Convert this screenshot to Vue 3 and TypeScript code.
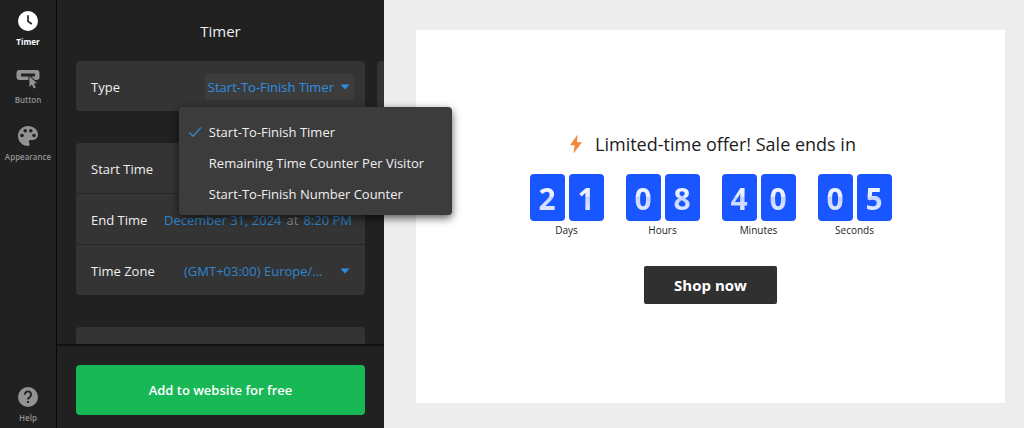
<script setup lang="ts">
import { ref } from 'vue'

const types: string[] = [
  'Start-To-Finish Timer',
  'Remaining Time Counter Per Visitor',
  'Start-To-Finish Number Counter',
]
const selectedType = ref<string>(types[0])
const menuOpen = ref<boolean>(true)

function choose(type: string): void {
  selectedType.value = type
  menuOpen.value = false
}

interface Unit {
  label: string
  digits: string[]
}
const units: Unit[] = [
  { label: 'Days', digits: ['2', '1'] },
  { label: 'Hours', digits: ['0', '8'] },
  { label: 'Minutes', digits: ['4', '0'] },
  { label: 'Seconds', digits: ['0', '5'] },
]
</script>

<template>
  <div class="editor">
    <nav class="rail">
      <button type="button" class="tab active">
        <svg width="20" height="20" viewBox="0 0 20 20">
          <circle cx="10" cy="10" r="10" fill="currentColor" />
          <path d="M10 4.2V10.4L13.8 13" fill="none" stroke="#212121" stroke-width="1.7" />
        </svg>
        <span>Timer</span>
      </button>
      <button type="button" class="tab tab-button">
        <svg width="24" height="20" viewBox="0 0 24 20">
          <path
            d="M3.5 1H20.5A3 3 0 0 1 23.5 4V8A3 3 0 0 1 20.5 11H3.5A3 3 0 0 1 .5 8V4A3 3 0 0 1 3.5 1ZM5 4.4V7.6H19V4.4Z"
            fill="currentColor"
            fill-rule="evenodd"
          />
          <path
            d="M13.4 7.2L21 14.2L17.8 14.6L19.8 18.4L17.8 19.4L15.8 15.6L13.4 17.9Z"
            fill="currentColor"
            stroke="#212121"
            stroke-width="2"
            paint-order="stroke"
          />
        </svg>
        <span>Button</span>
      </button>
      <button type="button" class="tab">
        <svg width="20" height="20" viewBox="0 0 20 20">
          <path
            d="M10 0C4.4 0 0 4.4 0 10S4.4 20 10 20C11 20 11.7 19.2 11.7 18.3C11.7 17.2 10.8 16.8 10.8 15.6C10.8 14.5 11.7 13.9 12.8 13.9H14.8C17.8 13.9 20 11.6 20 8.8C20 3.9 15.5 0 10 0Z"
            fill="currentColor"
          />
          <g fill="#212121">
            <circle cx="4" cy="9.5" r="1.8" />
            <circle cx="7.2" cy="4.8" r="1.8" />
            <circle cx="12.8" cy="4.8" r="1.8" />
            <circle cx="16" cy="9.5" r="1.8" />
          </g>
        </svg>
        <span>Appearance</span>
      </button>
      <button type="button" class="tab help">
        <svg width="20" height="20" viewBox="0 0 20 20">
          <circle cx="10" cy="10" r="10" fill="currentColor" />
          <path
            d="M6.9 7.6A3.1 3.1 0 1 1 11.8 10C10.6 10.8 10 11.2 10 12.6"
            fill="none"
            stroke="#212121"
            stroke-width="1.9"
          />
          <rect x="9" y="14" width="2" height="2" fill="#212121" />
        </svg>
        <span>Help</span>
      </button>
    </nav>

    <aside class="panel">
      <div class="settings">
        <h1>Timer</h1>
        <div class="track">
          <section class="card">
            <div class="row">
              <span id="type-label">Type</span>
              <div class="dropdown">
                <button
                  type="button"
                  class="type-button"
                  aria-haspopup="listbox"
                  aria-labelledby="type-label type-value"
                  :aria-expanded="menuOpen"
                  @click="menuOpen = !menuOpen"
                >
                  <span id="type-value">{{ selectedType }}</span>
                  <svg class="caret" width="10" height="6" viewBox="0 0 10 6">
                    <path d="M0.5 0.5H9.5L5 5.5Z" fill="currentColor" />
                  </svg>
                </button>
                <div v-if="menuOpen" class="menu" role="listbox" aria-labelledby="type-label">
                  <button
                    v-for="type in types"
                    :key="type"
                    type="button"
                    class="option"
                    role="option"
                    :aria-selected="type === selectedType"
                    @click="choose(type)"
                  >
                    <span class="mark">
                      <svg v-if="type === selectedType" width="14" height="12" viewBox="0 0 14 12">
                        <path d="M1 6.2L5 10.2L13 1.6" fill="none" stroke="#2e86cf" stroke-width="1.4" />
                      </svg>
                    </span>
                    {{ type }}
                  </button>
                </div>
              </div>
            </div>
          </section>
          <div class="card next"></div>
        </div>

        <section class="card">
          <div class="row">
            <span>Start Time</span>
          </div>
          <div class="row">
            <span>End Time</span>
            <div class="moment">
              <button type="button" class="value">December 31, 2024</button>
              <span class="at">at</span>
              <button type="button" class="value">8:20 PM</button>
            </div>
          </div>
          <div class="row">
            <label for="zone">Time Zone</label>
            <div class="zone">
              <select id="zone">
                <option>(GMT+03:00) Europe/...</option>
              </select>
              <svg class="caret" width="10" height="6" viewBox="0 0 10 6">
                <path d="M0.5 0.5H9.5L5 5.5Z" fill="currentColor" />
              </svg>
            </div>
          </div>
        </section>

        <section class="card">
          <div class="row"></div>
        </section>
      </div>

      <footer>
        <button type="button" class="add">Add to website for free</button>
      </footer>
    </aside>

    <main class="preview">
      <div class="canvas">
        <h2>
          <svg width="14" height="20" viewBox="0 0 14 20">
            <path d="M8.6 0.5L1 11.2H5.6L4.6 19.5L13 8.2H8Z" fill="#f5873a" />
          </svg>
          Limited-time offer! Sale ends in
        </h2>
        <div class="units">
          <div v-for="unit in units" :key="unit.label" class="unit">
            <div class="digits">
              <span v-for="(digit, i) in unit.digits" :key="i" class="tile">
                <span class="digit">{{ digit }}</span>
              </span>
            </div>
            <span class="unit-label">{{ unit.label }}</span>
          </div>
        </div>
        <a href="#" class="shop">Shop now</a>
      </div>
    </main>
  </div>
</template>

<style scoped>
.editor {
  display: flex;
  height: 100vh;
  min-height: 400px;
  overflow: hidden;
  background: #ededed;
  color: #f0f0f0;
  font-family: 'Segoe UI', 'Open Sans', 'Noto Sans', sans-serif;
  font-size: 13px;
  line-height: 20px;
}

button,
select {
  margin: 0;
  padding: 0;
  border: 0;
  background: none;
  color: inherit;
  font: inherit;
  cursor: pointer;
}

.rail {
  box-sizing: border-box;
  flex: none;
  display: flex;
  flex-direction: column;
  gap: 20px;
  width: 57px;
  padding: 11px 0 3px;
  border-right: 1px solid #080808;
  background: #212121;
}

.tab {
  display: flex;
  flex-direction: column;
  align-items: center;
  gap: 4px;
  color: #929292;
  font-size: 8px;
  line-height: 14px;
  font-weight: 600;
}

.tab svg {
  flex: none;
}

.tab.active {
  color: #fff;
  font-weight: 700;
}

.tab-button {
  margin-bottom: -1px;
}

.help {
  margin-top: auto;
}

.panel {
  position: relative;
  z-index: 1;
  flex: none;
  display: flex;
  flex-direction: column;
  width: 327px;
  background: #212121;
}

.settings {
  flex: 1;
  display: flex;
  flex-direction: column;
  gap: 32px;
  min-height: 0;
  padding-left: 19px;
  clip-path: inset(0 -100px 0 0);
}

h1 {
  margin: 21px 19px -12px 0;
  font-size: 15px;
  font-weight: 400;
  line-height: 20px;
  text-align: center;
}

.track {
  position: relative;
  z-index: 2;
  display: flex;
  gap: 12px;
}

.card {
  flex: none;
  width: 289px;
  border-radius: 4px;
  background: #343434;
}

.card.next {
  flex: 1;
  width: auto;
  border-radius: 4px 0 0 0;
}

.row {
  box-sizing: border-box;
  display: flex;
  align-items: center;
  justify-content: space-between;
  height: 50px;
  padding: 2px 11px 0 15px;
}

.row + .row {
  height: 51px;
  border-top: 1px solid #262626;
}

.dropdown {
  position: relative;
}

.type-button {
  display: flex;
  align-items: center;
  gap: 6px;
  height: 26px;
  padding: 0 4px 0 3px;
  border-radius: 3px;
  background: #3c3c3c;
  color: #2e8fe0;
}

.caret {
  flex: none;
  color: #2e8fe0;
}

.menu {
  position: absolute;
  top: 33px;
  left: -26px;
  box-sizing: border-box;
  width: 273px;
  padding: 9px 0 6px;
  border-radius: 4px;
  background: #3c3c3c;
  box-shadow: 0 3px 8px rgba(0, 0, 0, 0.65);
}

.option {
  display: flex;
  align-items: center;
  width: 100%;
  height: 31px;
  white-space: nowrap;
}

.mark {
  display: flex;
  width: 21px;
  padding-left: 9px;
}

.moment {
  display: flex;
  gap: 5px;
  padding-right: 2px;
}

.value,
.zone {
  color: #2e86cf;
}

.at {
  color: #8c8c8c;
}

.zone {
  display: flex;
  align-items: center;
  gap: 17px;
  padding-right: 4px;
}

.zone select {
  appearance: none;
}

footer {
  padding: 19px;
  padding-bottom: 13px;
  border-top: 2px solid #111;
}

.add {
  width: 100%;
  height: 50px;
  border-radius: 4px;
  background: #18b856;
  color: #fff;
  font-weight: 600;
}

.preview {
  flex: 1;
  display: flex;
  min-width: 0;
  padding: 30px 19px 25px 32px;
}

.canvas {
  flex: 1;
  display: flex;
  flex-direction: column;
  align-items: center;
  justify-content: center;
  background: #fff;
  color: #1c1c1c;
}

h2 {
  display: flex;
  align-items: center;
  gap: 12px;
  margin: 0 0 16px;
  padding-left: 4px;
  font-size: 18px;
  font-weight: 400;
  line-height: 28px;
}

.units {
  display: flex;
  gap: 22px;
}

.unit {
  display: flex;
  flex-direction: column;
  align-items: center;
}

.digits {
  display: flex;
  gap: 4px;
}

.tile {
  display: flex;
  align-items: center;
  justify-content: center;
  width: 35px;
  height: 47px;
  border-radius: 4px;
  background: #1a56ff;
}

.digit {
  padding-top: 4px;
  font-size: 30px;
  font-weight: 700;
  line-height: 40px;
  background: linear-gradient(#f4f7ff 25%, #e4ecff 50%, #c2d2ff 50%, #e8eeff 88%);
  background-clip: text;
  color: transparent;
}

.unit-label {
  font-size: 10px;
  line-height: 18px;
}

.shop {
  margin-top: 27px;
  padding: 0 30px;
  border-radius: 2px;
  background: #303030;
  color: #fff;
  font-size: 15px;
  font-weight: 700;
  line-height: 38px;
  text-decoration: none;
}
</style>

<style>
body {
  margin: 0;
}
</style>
